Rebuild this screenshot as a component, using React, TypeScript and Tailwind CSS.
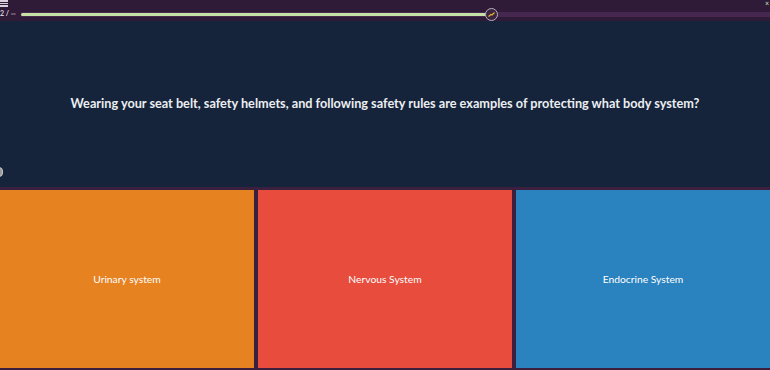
import React from "react";

const answers = [
  { label: "Urinary system", color: "bg-[#e6821f]" },
  { label: "Nervous System", color: "bg-[#e74c3c]" },
  { label: "Endocrine System", color: "bg-[#2a82be]" },
];

export default function App() {
  return (
    <div className="w-[770px] h-[370px] overflow-hidden flex flex-col bg-[#2a1630] font-['Lato',sans-serif]">
      {/* Top bar */}
      <div className="relative h-[21px] shrink-0 bg-[#2f1a37]">
        <div className="absolute left-0 top-0 flex flex-col gap-[1px]">
          <span className="block w-[8px] h-[1.5px] bg-[#d8d0dc]" />
          <span className="block w-[8px] h-[1.5px] bg-[#d8d0dc]" />
          <span className="block w-[8px] h-[1.5px] bg-[#d8d0dc]" />
        </div>
        <div className="absolute left-0 top-[9px] text-[7px] leading-[9px] font-bold text-[#d8d0dc]">
          2 / <span className="text-[#8a7a90] font-normal">∞</span>
        </div>
        <div className="absolute right-[1px] top-0 text-[7px] leading-[6px] text-[#d8e8c0]">×</div>
        {/* progress track */}
        <div className="absolute left-[21px] right-0 top-[12px] h-[5px] bg-[#45274f] flex items-center">
          <div className="h-[3px] w-[470px] rounded-full bg-[#c5e1a5]" />
        </div>
        <div className="absolute left-[485px] top-[8px] w-[13px] h-[13px] rounded-full border-[1.5px] border-[#b8b0bc] bg-[#3a2440] flex items-center justify-center">
          <svg width="7" height="5" viewBox="0 0 7 5">
            <path d="M0.5 4.5 L3 2.5 L4 3 L6.5 0.5" stroke="#e0b030" strokeWidth="1.3" fill="none" />
          </svg>
        </div>
      </div>

      {/* Question */}
      <div className="relative h-[166px] shrink-0 bg-[#15243a] flex items-center justify-center">
        <p className="text-[12.7px] font-bold text-[#eceef2] text-center">
          Wearing your seat belt, safety helmets, and following safety rules are examples of protecting what body system?
        </p>
        <div className="absolute left-[-5px] top-[146px] w-[8px] h-[10px] rounded-full border border-[#c8c8c8] bg-[#9a9a9a]" />
      </div>

      {/* Answers */}
      <div className="flex-1 flex gap-[4px] pt-[3px] pb-[2px] bg-[#3a1f3e]">
        {answers.map((a) => (
          <div key={a.label} className={`flex-1 flex items-center justify-center pt-[2px] ${a.color}`}>
            <span className="text-[10.3px] text-white">{a.label}</span>
          </div>
        ))}
      </div>
    </div>
  );
}
